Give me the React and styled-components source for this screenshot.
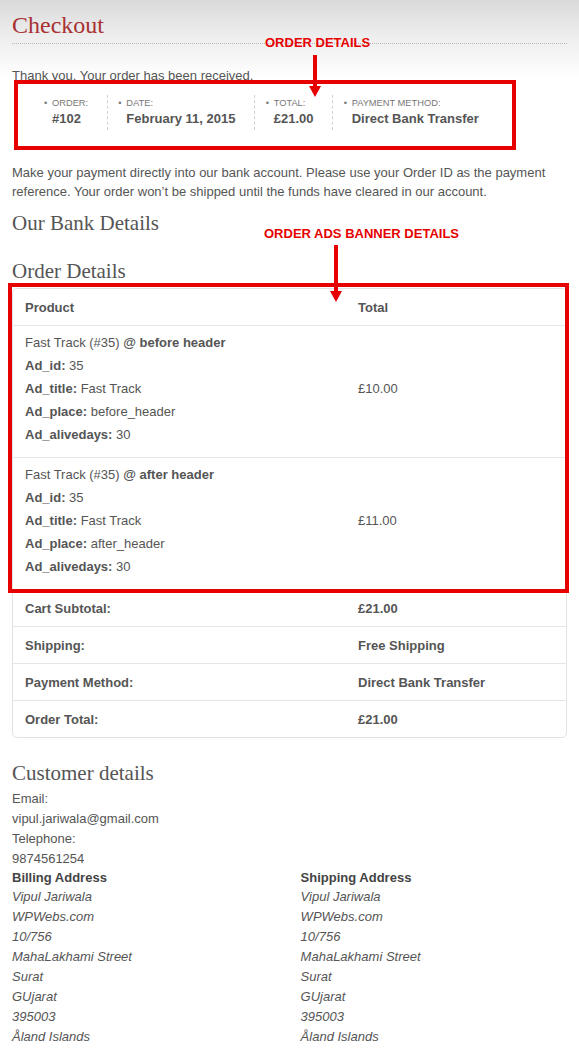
import React from "react";
import styled, { createGlobalStyle } from "styled-components";

const GlobalStyle = createGlobalStyle`
  html {
    overflow: hidden;
  }
  body {
    margin: 0;
    background: #fff linear-gradient(#dadada 0, #ededed 35px, #fff 78px) no-repeat;
    background-size: 100% 78px;
    font-family: "Liberation Sans", Arial, sans-serif;
    font-size: 13px;
    color: #555;
  }
`;

const items = [
  {
    name: "Fast Track (#35)",
    place: "before header",
    meta: [
      ["Ad_id", "35"],
      ["Ad_title", "Fast Track"],
      ["Ad_place", "before_header"],
      ["Ad_alivedays", "30"],
    ],
    total: "£10.00",
  },
  {
    name: "Fast Track (#35)",
    place: "after header",
    meta: [
      ["Ad_id", "35"],
      ["Ad_title", "Fast Track"],
      ["Ad_place", "after_header"],
      ["Ad_alivedays", "30"],
    ],
    total: "£11.00",
  },
];

const totals = [
  ["Cart Subtotal:", "£21.00"],
  ["Shipping:", "Free Shipping"],
  ["Payment Method:", "Direct Bank Transfer"],
  ["Order Total:", "£21.00"],
];

const address = [
  "Vipul Jariwala",
  "WPWebs.com",
  "10/756",
  "MahaLakhami Street",
  "Surat",
  "GUjarat",
  "395003",
  "Åland Islands",
];

const Arrow = ({ x, y, height }) => (
  <ArrowSvg
    $x={x}
    $y={y}
    width="12"
    height={height}
    viewBox={`0 0 12 ${height}`}>
    <rect x="4" y="0" width="4" height={height - 9} fill="#e60000" />
    <polygon
      points={`0,${height - 11} 12,${height - 11} 6,${height}`}
      fill="#e60000"
    />
  </ArrowSvg>
);

const App = () => {
  return (
    <Page>
      <GlobalStyle />
      <Title>Checkout</Title>
      <Notice>Thank you. Your order has been received.</Notice>

      <Overview>
        <OverviewItem>
          <OverviewLabel>Order:</OverviewLabel>
          <OverviewValue>#102</OverviewValue>
        </OverviewItem>
        <OverviewItem>
          <OverviewLabel>Date:</OverviewLabel>
          <OverviewValue>February 11, 2015</OverviewValue>
        </OverviewItem>
        <OverviewItem>
          <OverviewLabel>Total:</OverviewLabel>
          <OverviewValue>£21.00</OverviewValue>
        </OverviewItem>
        <OverviewItem>
          <OverviewLabel>Payment Method:</OverviewLabel>
          <OverviewValue>Direct Bank Transfer</OverviewValue>
        </OverviewItem>
      </Overview>

      <Instructions>
        Make your payment directly into our bank account. Please use your
        Order ID as the payment reference. Your order won’t be shipped until
        the funds have cleared in our account.
      </Instructions>

      <SectionTitle $gap={8}>Our Bank Details</SectionTitle>
      <SectionTitle $gap={20}>Order Details</SectionTitle>

      <OrderTable>
        <Highlighted>
          <Row $height={36}>
            <HeadCell>Product</HeadCell>
            <HeadCell>Total</HeadCell>
          </Row>
          {items.map((item) => (
            <ItemRow key={item.place}>
              <ProductCell>
                <Line>
                  {item.name} <strong>@ {item.place}</strong>
                </Line>
                {item.meta.map(([key, value]) => (
                  <Line key={key}>
                    <strong>{key}:</strong> {value}
                  </Line>
                ))}
              </ProductCell>
              <PriceCell>{item.total}</PriceCell>
            </ItemRow>
          ))}
        </Highlighted>
        {totals.map(([label, value]) => (
          <Row key={label} $height={36}>
            <HeadCell>{label}</HeadCell>
            <HeadCell>{value}</HeadCell>
          </Row>
        ))}
      </OrderTable>

      <SectionTitle $gap={21}>Customer details</SectionTitle>
      <Contact>
        <dt>Email:</dt>
        <dd>vipul.jariwala@gmail.com</dd>
        <dt>Telephone:</dt>
        <dd>9874561254</dd>
      </Contact>

      <Addresses>
        <div>
          <AddressTitle>Billing Address</AddressTitle>
          <Address>
            {address.map((line) => (
              <span key={line}>{line}</span>
            ))}
          </Address>
        </div>
        <div>
          <AddressTitle>Shipping Address</AddressTitle>
          <Address>
            {address.map((line) => (
              <span key={line}>{line}</span>
            ))}
          </Address>
        </div>
      </Addresses>

      <Callout $x={265} $y={35}>
        ORDER DETAILS
      </Callout>
      <Arrow x={309} y={55} height={42} />
      <Callout $x={264} $y={226}>
        ORDER ADS BANNER DETAILS
      </Callout>
      <Arrow x={330} y={245} height={57} />
    </Page>
  );
};

export default App;

const Page = styled.div`
  position: relative;
  padding: 0 12px;
`;

const Title = styled.h1`
  margin: 0;
  padding: 10px 0 3px;
  font: 400 24px/30px "Liberation Serif", "Times New Roman", serif;
  color: #a83232;
  border-bottom: 1px dotted #b9b9b9;
`;

const Notice = styled.p`
  margin: 22px 0 0;
  line-height: 19px;
`;

const Overview = styled.ul`
  position: relative;
  display: flex;
  list-style: none;
  margin: 10px 0 0;
  padding: 0 0 0 40px;

  &::after {
    content: "";
    position: absolute;
    left: 2px;
    top: -15px;
    width: 502px;
    height: 70px;
    box-sizing: border-box;
    border: 4px solid #e60000;
  }
`;

const OverviewItem = styled.li`
  padding: 1px 18.6px 3px 0;
  margin-right: 18.6px;
  border-right: 1px dashed #d3ced2;

  &:last-child {
    border-right: 0;
  }
`;

const OverviewLabel = styled.span`
  display: block;
  font-size: 9.3px;
  line-height: 14px;
  text-transform: uppercase;
  color: #777;

  &::before {
    content: "•";
    display: inline-block;
    width: 8px;
    margin-left: -8px;
  }
`;

const OverviewValue = styled.strong`
  display: block;
  font-size: 13px;
  line-height: 17px;
  color: #555;
`;

const Instructions = styled.p`
  margin: 33px 0 0;
  line-height: 19px;
`;

const SectionTitle = styled.h2`
  margin: ${(props) => props.$gap}px 0 0;
  font: 400 21px/28px "Liberation Serif", "Times New Roman", serif;
  color: #555;
`;

const OrderTable = styled.div`
  margin-top: 3px;
  border: 1px solid #e2e2e2;
  border-radius: 5px;
`;

const Highlighted = styled.div`
  position: relative;

  &::after {
    content: "";
    position: absolute;
    top: -6px;
    left: -5px;
    right: -3px;
    bottom: -4px;
    border: 4px solid #e60000;
  }
`;

const Row = styled.div`
  display: grid;
  grid-template-columns: 333px 1fr;
  align-items: center;
  height: ${(props) => props.$height}px;
  border-top: 1px solid #e6e6e6;

  ${Highlighted} > &:first-child {
    border-top: 0;
  }
`;

const ItemRow = styled.div`
  display: grid;
  grid-template-columns: 333px 1fr;
  align-items: center;
  padding: 5px 0 11px;
  border-top: 1px solid #e6e6e6;
`;

const HeadCell = styled.div`
  padding: 0 12px;
  font-weight: 700;
`;

const ProductCell = styled.div`
  padding: 0 12px;
`;

const Line = styled.div`
  line-height: 23px;
`;

const PriceCell = styled.div`
  padding: 0 12px;
`;

const Contact = styled.dl`
  margin: 2px 0 0;
  line-height: 20px;

  dd {
    margin: 0;
  }
`;

const Addresses = styled.div`
  display: grid;
  grid-template-columns: 48% 48%;
  justify-content: space-between;
`;

const AddressTitle = styled.h3`
  margin: 0;
  font-size: 13px;
  line-height: 18px;
  font-weight: 700;
  color: #444;
`;

const Address = styled.address`
  display: flex;
  flex-direction: column;
  line-height: 20px;
  font-style: italic;
`;

const Callout = styled.div`
  position: absolute;
  left: ${(props) => props.$x}px;
  top: ${(props) => props.$y}px;
  font-size: 13px;
  line-height: 16px;
  font-weight: 700;
  color: #e60000;
  white-space: nowrap;
`;

const ArrowSvg = styled.svg`
  position: absolute;
  left: ${(props) => props.$x}px;
  top: ${(props) => props.$y}px;
  display: block;
`;
